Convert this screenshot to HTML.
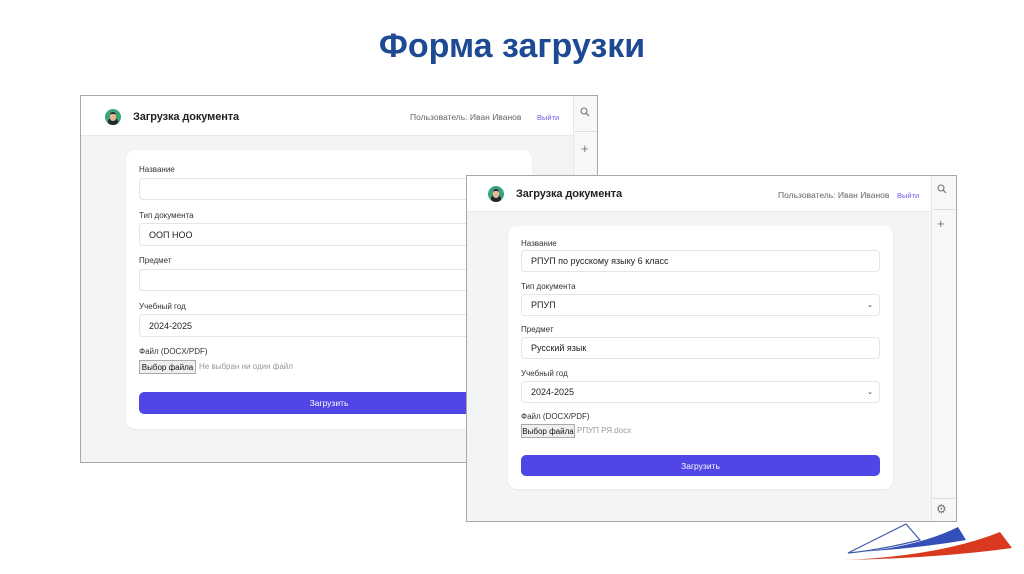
<!DOCTYPE html>
<html><head><meta charset="utf-8"><style>
*{margin:0;padding:0;box-sizing:border-box}
body{width:1024px;height:574px;background:#fff;position:relative;overflow:hidden;font-family:"Liberation Sans","DejaVu Sans",sans-serif}
.a{position:absolute}
h1{position:absolute;left:0;width:1024px;top:27px;text-align:center;font-size:34px;font-weight:bold;color:#1e4a94}
.win{position:absolute;background:#f3f4f6;border:1px solid #a8a8a8;overflow:hidden}
.hdr{position:absolute;left:0;top:0;background:#fff;border-bottom:1px solid #e8e9ec}
.side{position:absolute;top:0;bottom:0;background:#f7f7f8;border-left:1px solid #e5e5e5}
.card{position:absolute;background:#fff;border-radius:9px;box-shadow:0 1px 2px rgba(0,0,0,.06)}
.lbl{position:absolute;font-size:8px;color:#333}
.inp{position:absolute;background:#fff;border:1px solid #e3e5e8;border-radius:4px;font-size:9px;color:#222;padding-left:9px;display:flex;align-items:center}
.btn{position:absolute;background:#4f46e5;border-radius:5px;color:#fff;font-size:8.5px;display:flex;align-items:center;justify-content:center}
.fb{position:absolute;background:#efefef;border:1px solid #aaa;font-size:8px;color:#111;display:flex;align-items:center;justify-content:center}
.ft{position:absolute;font-size:8px;color:#999}
.av{position:absolute;width:16px;height:16px;border-radius:50%;background:#3aa37c;overflow:hidden}
.av:after{content:"";position:absolute;left:3px;top:9px;width:10px;height:9px;border-radius:4px 4px 0 0;background:#1f2a33}
.av:before{content:"";position:absolute;left:5px;top:3px;width:6px;height:7px;border-radius:3px;background:#e8b990;border-top:2px solid #2a2a2a;z-index:1}
.ttl{position:absolute;font-size:11px;color:#222;font-weight:bold;letter-spacing:-0.1px}
.usr{position:absolute;font-size:8.5px;color:#666}
.out{position:absolute;font-size:7.5px;color:#6d5ce8}
.ico{position:absolute;font-size:11px;color:#777}
</style></head><body>
<h1>Форма загрузки</h1>

<div class="win" style="left:80px;top:95px;width:518px;height:368px">
 <div class="hdr" style="width:492px;height:40px"></div>
 <div class="av" style="left:24px;top:13px"></div>
 <div class="ttl" style="left:52px;top:15px">Загрузка документа</div>
 <div class="usr" style="left:329px;top:16px">Пользователь: Иван Иванов</div>
 <div class="out" style="left:456px;top:17px">Выйти</div>
 <div class="side" style="left:492px;width:26px"></div>
 <svg class="a" style="left:499px;top:11px" width="10" height="10"><circle cx="4" cy="4" r="3" fill="none" stroke="#777" stroke-width="1.1"/><path d="M6.2 6.2L9 9" stroke="#777" stroke-width="1.2"/></svg>
 <div class="a" style="left:494px;top:35px;width:22px;height:1px;background:#ddd"></div>
 <div class="ico" style="left:500px;top:45px;font-size:13px">+</div>
 <div class="card" style="left:45px;top:54px;width:406px;height:279px"></div>
 <div class="lbl" style="left:58px;top:69px">Название</div>
 <div class="inp" style="left:58px;top:82px;width:380px;height:22px"></div>
 <div class="lbl" style="left:58px;top:115px">Тип документа</div>
 <div class="inp" style="left:58px;top:127px;width:380px;height:23px">ООП НОО</div>
 <div class="lbl" style="left:58px;top:160px">Предмет</div>
 <div class="inp" style="left:58px;top:173px;width:380px;height:22px"></div>
 <div class="lbl" style="left:58px;top:206px">Учебный год</div>
 <div class="inp" style="left:58px;top:218px;width:380px;height:23px">2024-2025</div>
 <div class="lbl" style="left:58px;top:251px">Файл (DOCX/PDF)</div>
 <div class="fb" style="left:58px;top:264px;width:57px;height:14px">Выбор файла</div>
 <div class="ft" style="left:118px;top:266px">Не выбран ни один файл</div>
 <div class="btn" style="left:58px;top:296px;width:380px;height:22px">Загрузить</div>
</div>

<div class="win" style="left:466px;top:175px;width:491px;height:347px">
 <div class="hdr" style="width:464px;height:36px"></div>
 <div class="av" style="left:21px;top:10px"></div>
 <div class="ttl" style="left:49px;top:12px">Загрузка документа</div>
 <div class="usr" style="left:311px;top:14px">Пользователь: Иван Иванов</div>
 <div class="out" style="left:430px;top:15px">Выйти</div>
 <div class="side" style="left:464px;width:27px"></div>
 <svg class="a" style="left:470px;top:8px" width="10" height="10"><circle cx="4" cy="4" r="3" fill="none" stroke="#777" stroke-width="1.1"/><path d="M6.2 6.2L9 9" stroke="#777" stroke-width="1.2"/></svg>
 <div class="a" style="left:466px;top:33px;width:22px;height:1px;background:#ddd"></div>
 <div class="ico" style="left:470px;top:40px;font-size:13px">+</div>
 <div class="a" style="left:466px;top:322px;width:22px;height:1px;background:#ddd"></div>
 <div class="ico" style="left:469px;top:326px;font-size:12px">&#9881;</div>
 <div class="card" style="left:41px;top:50px;width:385px;height:263px"></div>
 <div class="lbl" style="left:54px;top:63px">Название</div>
 <div class="inp" style="left:54px;top:74px;width:359px;height:22px">РПУП по русскому языку 6 класс</div>
 <div class="lbl" style="left:54px;top:106px">Тип документа</div>
 <div class="inp" style="left:54px;top:118px;width:359px;height:22px">РПУП<span style="position:absolute;right:6px;font-size:7px">&#8964;</span></div>
 <div class="lbl" style="left:54px;top:149px">Предмет</div>
 <div class="inp" style="left:54px;top:161px;width:359px;height:22px">Русский язык</div>
 <div class="lbl" style="left:54px;top:193px">Учебный год</div>
 <div class="inp" style="left:54px;top:205px;width:359px;height:22px">2024-2025<span style="position:absolute;right:6px;font-size:7px">&#8964;</span></div>
 <div class="lbl" style="left:54px;top:236px">Файл (DOCX/PDF)</div>
 <div class="fb" style="left:54px;top:248px;width:54px;height:14px">Выбор файла</div>
 <div class="ft" style="left:110px;top:250px">РПУП РЯ.docx</div>
 <div class="btn" style="left:54px;top:279px;width:359px;height:21px">Загрузить</div>
</div>

<svg class="a" style="left:840px;top:518px" width="180" height="56" viewBox="0 0 180 56">
 <path d="M8 35 L66 6 L80 22 Q40 32 8 35 Z" fill="#fff" stroke="#3a5aa8" stroke-width="1.2"/>
 <path d="M20 34 Q80 28 118 9 L126 22 Q80 30 20 34 Z" fill="#3450b8"/>
 <path d="M4 42 Q100 38 160 14 L172 30 Q100 40 4 42 Z" fill="#d93a1f"/>
</svg>
</body></html>
